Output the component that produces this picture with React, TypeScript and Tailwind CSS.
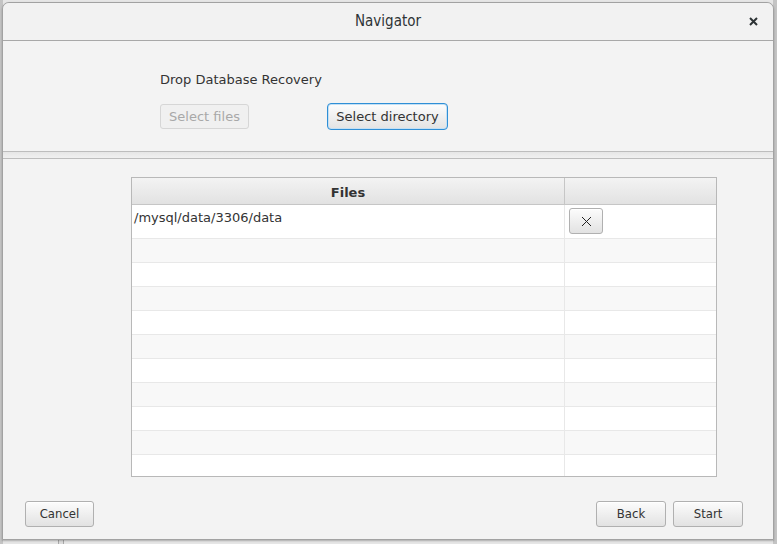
import React from "react";

const btn =
  "flex items-center justify-center rounded-[3px] border border-[#b0b0b0] bg-gradient-to-b from-[#fcfcfc] to-[#e2e2e2] text-[#333] shadow-[inset_0_1px_0_#ffffff]";

function RowX() {
  return (
    <svg width="11" height="11" viewBox="0 0 11 11">
      <path d="M1 1 L10 10 M10 1 L1 10" stroke="#222" strokeWidth="1" fill="none" />
    </svg>
  );
}

export default function App() {
  const rows = Array.from({ length: 10 });
  return (
    <div
      className="relative w-[777px] h-[544px] overflow-hidden bg-[#e6e6e6]"
      style={{ fontFamily: '"DejaVu Sans", sans-serif' }}
    >
      <div className="absolute left-[58px] top-[530px] w-[6px] h-[20px] border-x border-[#a8a8a8] bg-[#dcdcdc]" />
      <div className="absolute left-0 top-0 w-[3px] h-[544px] bg-[#c4c4c4]" />
      <div className="absolute right-0 top-0 w-[4px] h-[544px] bg-[#c4c4c4]" />
      <div className="relative ml-[2px] mt-[2px] w-[772px] h-[538px] flex flex-col border border-[#a2a2a2] rounded-t-[7px] bg-[#f3f3f3] shadow-[0_1px_2px_rgba(0,0,0,0.25)]">
        {/* title bar */}
        <div className="relative h-[38px] flex items-center justify-center border-b border-[#a8a8a8] rounded-t-[7px] bg-[#f2f2f2]">
          <span
            className="text-[15px] text-[#2e3436]"
            style={{ fontFamily: '"DejaVu Sans Condensed", "DejaVu Sans", sans-serif' }}
          >
            Navigator
          </span>
          <div className="absolute right-[15px] top-[14px]">
            <svg width="9" height="9" viewBox="0 0 9 9">
              <path d="M1 1 L8 8 M8 1 L1 8" stroke="#2e3436" strokeWidth="2" fill="none" />
            </svg>
          </div>
        </div>
        {/* top pane */}
        <div className="h-[110px] flex flex-col pl-[157px] pt-[31px]">
          <div className="text-[13px] leading-[16px] text-[#333]">Drop Database Recovery</div>
          <div className="flex items-center mt-[15px]">
            <div className="ml-[0px] w-[89px] h-[25px] flex items-center justify-center rounded-[3px] border border-[#d6d6d6] bg-[#f0f0f0] text-[13px] text-[#a8a8a8]">
              Select files
            </div>
            <div className="ml-[78px] w-[121px] h-[27px] rounded-[4px] border border-[#2f8fd6] p-[1px] bg-[#c4e0f4]">
              <div className="w-full h-full flex items-center justify-center rounded-[2px] bg-gradient-to-b from-[#fcfcfc] to-[#e4e4e4] text-[13px] text-[#333]">
                Select directory
              </div>
            </div>
          </div>
        </div>
        {/* divider */}
        <div className="h-[8px] border-y border-[#bdbdbd] bg-gradient-to-b from-[#e6e6e6] to-[#f0f0f0]" />
        {/* bottom pane */}
        <div className="flex-1 flex flex-col">
          <div className="ml-[128px] mt-[18px] w-[586px] h-[300px] border border-[#b8b8b8] bg-white flex flex-col">
            <div className="h-[27px] shrink-0 flex border-b border-[#c6c6c6] bg-gradient-to-b from-[#f3f3f3] to-[#e2e2e2]">
              <div className="w-[433px] border-r border-[#c6c6c6] flex items-center justify-center pt-[3px] text-[13px] font-bold text-[#333]">
                Files
              </div>
              <div className="flex-1" />
            </div>
            <div className="h-[34px] shrink-0 flex border-b border-[#e8e8e8] bg-white">
              <div className="w-[433px] border-r border-[#e8e8e8] pl-[2px] pt-[5px] text-[13px] leading-[16px] text-[#333]">
                /mysql/data/3306/data
              </div>
              <div className="flex-1 pl-[4px] pt-[3px]">
                <div className={`${btn} w-[34px] h-[26px]`}>
                  <RowX />
                </div>
              </div>
            </div>
            {rows.map((_, i) => (
              <div
                key={i}
                className={`${i < 9 ? "h-[24px] shrink-0 border-b border-[#e8e8e8]" : "flex-1"} flex ${
                  i % 2 === 0 ? "bg-[#f8f8f8]" : "bg-white"
                }`}
              >
                <div className="w-[433px] border-r border-[#e8e8e8]" />
                <div className="flex-1" />
              </div>
            ))}
          </div>
          <div
            className="mt-[24px] flex items-center pl-[22px] pr-[30px] text-[13px]"
            style={{ fontFamily: '"DejaVu Sans Condensed", "DejaVu Sans", sans-serif' }}
          >
            <div className={`${btn} w-[69px] h-[26px]`}>Cancel</div>
            <div className="flex-1" />
            <div className={`${btn} w-[70px] h-[26px]`}>Back</div>
            <div className={`${btn} w-[70px] h-[26px] ml-[7px]`}>Start</div>
          </div>
        </div>
      </div>
    </div>
  );
}
